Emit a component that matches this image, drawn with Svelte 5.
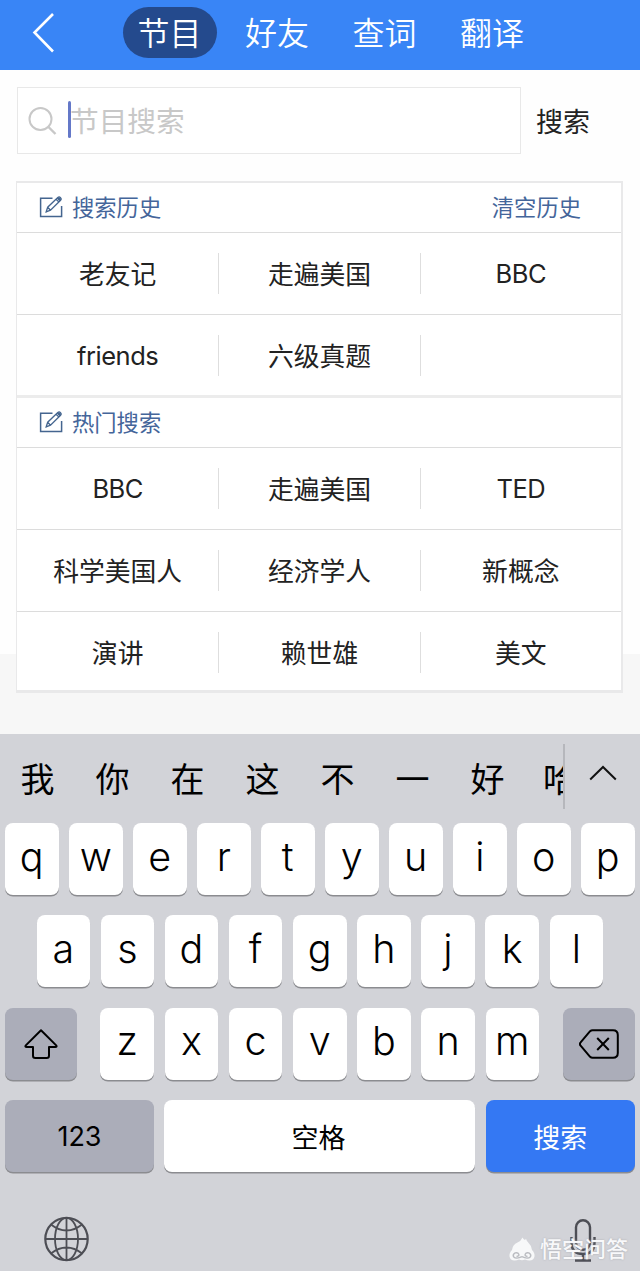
<script lang="ts">
  interface SearchGroup {
    title: string;
    action?: string;
    rows: string[][];
  }

  const tabs = ['节目', '好友', '查词', '翻译'];
  let activeTab = $state('节目');

  const groups: SearchGroup[] = [
    {
      title: '搜索历史',
      action: '清空历史',
      rows: [
        ['老友记', '走遍美国', 'BBC'],
        ['friends', '六级真题', '']
      ]
    },
    {
      title: '热门搜索',
      rows: [
        ['BBC', '走遍美国', 'TED'],
        ['科学美国人', '经济学人', '新概念'],
        ['演讲', '赖世雄', '美文']
      ]
    }
  ];

  const candidates = ['我', '你', '在', '这', '不', '一', '好', '哈'];
  const topKeys = 'qwertyuiop'.split('');
  const homeKeys = 'asdfghjkl'.split('');
  const bottomKeys = 'zxcvbnm'.split('');

  const isLatin = (word: string) => /^[a-z]+$/i.test(word);
</script>

<div class="screen">
  <header class="navbar">
    <button class="back" aria-label="返回">
      <svg width="24" height="42" viewBox="0 0 24 42" fill="none" stroke="#fff" stroke-width="2.6">
        <path d="M21 2 2.5 20.5 21 39.5" />
      </svg>
    </button>
    <nav class="tabs">
      {#each tabs as tab}
        <button class="tab" class:active={tab === activeTab} onclick={() => (activeTab = tab)}>{tab}</button>
      {/each}
    </nav>
  </header>

  <main class="content">
    <div class="search-row">
      <div class="search-box">
        <svg width="30" height="30" viewBox="0 0 30 30" fill="none" stroke="#c8c8c8" stroke-width="2">
          <circle cx="12.5" cy="13" r="11" />
          <path d="M20 20.5 27.5 28" stroke-width="2.4" />
        </svg>
        <span class="caret"></span>
        <span class="placeholder">节目搜索</span>
      </div>
      <button class="search-btn">搜索</button>
    </div>

    <div class="panel">
      {#each groups as group}
        <section class="group">
          <div class="group-head">
            <svg width="24" height="22" viewBox="0 0 24 22" fill="none" stroke="#44658f" stroke-width="1.5">
              <path d="M13.5 2.2H1.6v18.2h21V10" />
              <path d="m7.2 15.8 1.5-4.6L18.8 1.5q1.4-1.2 2.7.1t.1 2.6L11.5 14.2Z M8.7 11.2l2.8 3M17 3.2l3 2.9" stroke-width="1.3" />
              <path d="m17.8 2.5 1.7-1.3q2.9.2 2.3 2.8l-1.4 1.2Z" fill="#44658f" stroke="none" />
            </svg>
            <h2>{group.title}</h2>
            {#if group.action}
              <button class="clear">{group.action}</button>
            {/if}
          </div>
          {#each group.rows as row}
            <div class="row">
              {#each row as word}
                <div class="cell" class:latin={isLatin(word)}>{word}</div>
              {/each}
            </div>
          {/each}
        </section>
      {/each}
    </div>
  </main>

  <div class="keyboard">
    <div class="candidates">
      <div class="words">
        {#each candidates as word}
          <span>{word}</span>
        {/each}
      </div>
      <div class="expand">
        <svg width="28" height="16" viewBox="0 0 28 16" fill="none" stroke="#111" stroke-width="2">
          <path d="M1.2 14.5 14 2l12.8 12.5" />
        </svg>
      </div>
    </div>

    <div class="keys">
      <div class="key-row">
        {#each topKeys as k}<button class="key">{k}</button>{/each}
      </div>
      <div class="key-row home">
        {#each homeKeys as k}<button class="key">{k}</button>{/each}
      </div>
      <div class="key-row">
        <button class="key dark side" aria-label="shift">
          <svg width="36" height="32" viewBox="0 0 36 32" fill="none" stroke="#000" stroke-width="2" stroke-linejoin="round">
            <path d="M18 2.2 33.2 17.4q1.2 1.6-.9 1.6H26v8.7q0 2.3-2.3 2.3H12.3Q10 30 10 27.7V19H3.7q-2.1 0-.9-1.6Z" />
          </svg>
        </button>
        <div class="letters">
          {#each bottomKeys as k}<button class="key">{k}</button>{/each}
        </div>
        <button class="key dark side" aria-label="delete">
          <svg width="40" height="30" viewBox="0 0 40 30" fill="none" stroke="#000" stroke-width="2" stroke-linejoin="round">
            <path d="M13.5 1.2H34q4.8 0 4.8 4.8v18q0 4.8-4.8 4.8H13.5q-1.4 0-2.4-1L1.6 16.6q-1.5-1.6 0-3.2l9.5-11.2q1-1 2.4-1Z" />
            <path d="m18.2 9 11.6 12M29.8 9 18.2 21" />
          </svg>
        </button>
      </div>
      <div class="key-row functions">
        <button class="key dark numbers">123</button>
        <button class="key space">空格</button>
        <button class="key submit">搜索</button>
      </div>
    </div>

    <div class="dock">
      <svg width="46" height="46" viewBox="0 0 46 46" fill="none" stroke="#4d4e55" stroke-width="1.8">
        <circle cx="22.5" cy="23" r="21.2" stroke-width="2.2" />
        <ellipse cx="22.5" cy="23" rx="11.5" ry="21.2" />
        <path d="M22.5 1.8v42.4M1.3 23h42.4M7 8.5q7.500 6 15.500 6t15.500-6M7 37.500q7.500-6 15.500-6t15.500 6" />
      </svg>
      <svg class="mic" width="26" height="44" viewBox="0 0 26 44" fill="none" stroke="#4d4e55" stroke-width="2.4">
        <rect x="6" y="1.3" width="14" height="29.5" rx="7" />
        <path d="M1.5 18v6q0 11 11.5 11t11.5-11v-6M13 35v6M5 41.5h16" />
      </svg>
      <div class="watermark">
        <svg width="28" height="26" viewBox="0 0 28 26">
          <path d="M14.500.5q.8 1.800 2.500 2.500l1-1.200q.5 2 2.200 3.800 3.300 3 3.800 7.400 3 3 2.500 6.500-.8 4-5 4-2.500 0-4.500-1-3 1.500-6 0-2 1-4.500 1-4.200 0-5-4Q1 16 4 13q.5-5.500 5.500-7.500Q13 4 14.500.5Z" fill="#f7f8f9" />
          <path d="M8.500 19.500q3-.2 2.300-2.300-.8-1.900-3.600-1.300-2.700 1.300-1.700 3.800 2.700 2.800 8.500 0M19.500 19.500q-3-.2-2.300-2.300.8-1.900 3.600-1.300 2.700 1.300 1.700 3.800-2.700 2.800-8.500 0" fill="none" stroke="#b9bbc0" stroke-width="1.4" />
        </svg>
        <span>悟空问答</span>
      </div>
    </div>
  </div>
</div>

<style>
  :global(body) {
    margin: 0;
  }
  .screen {
    width: 640px;
    height: 1271px;
    display: flex;
    flex-direction: column;
    overflow: hidden;
    font-family: Inter, 'Noto Sans CJK SC', sans-serif;
    color: #222;
  }
  button {
    padding: 0;
    border: 0;
    background: none;
    font: inherit;
    color: inherit;
  }
  svg {
    display: block;
    flex: none;
  }
  .navbar {
    flex: none;
    height: 70px;
    box-sizing: border-box;
    padding: 7px 0 0 32px;
    display: flex;
    align-items: flex-start;
    background: #3985f6;
  }
  .back {
    margin-top: 5px;
    width: 91px;
  }
  .tabs {
    display: flex;
    gap: 13.5px;
  }
  .tab {
    width: 94px;
    height: 51px;
    padding: 2px 1px 0 0;
    border-radius: 26px;
    font-size: 32px;
    line-height: 49px;
    font-weight: 350;
    color: #fff;
  }
  .tab.active {
    background: #244a8d;
  }
  .content {
    flex: none;
    height: 664px;
    box-sizing: border-box;
    padding: 17px 17px 0 16px;
    background: linear-gradient(#fefefe 584px, #f7f7f7 584px);
  }
  .search-row {
    display: flex;
    align-items: center;
    height: 67px;
    margin-bottom: 27px;
  }
  .search-box {
    width: 504px;
    height: 67px;
    box-sizing: border-box;
    margin-left: 1px;
    padding-left: 10px;
    display: flex;
    align-items: center;
    border: 1px solid #e8e8e8;
    background: #fff;
  }
  .caret {
    width: 3px;
    height: 37px;
    margin: -2px 0 0 10px;
    border-radius: 2px;
    background: #6478c8;
  }
  .placeholder {
    margin-left: -1px;
    padding-top: 2px;
    font-size: 28.7px;
    line-height: 40px;
    color: #c8c8c8;
  }
  .search-btn {
    margin-left: 15px;
    padding-top: 4px;
    font-size: 27px;
    line-height: 40px;
  }
  .panel {
    height: 512px;
    box-sizing: border-box;
    border: solid #e9e9ea;
    border-width: 2px 2px 3px;
    border-left-width: 1.5px;
    background: #fff;
  }
  .group + .group {
    border-top: 3px solid #ececec;
    margin-top: -1px;
  }
  .group-head {
    height: 49px;
    padding: 0 40px 0 22px;
    display: flex;
    align-items: center;
    font-size: 22.3px;
    line-height: 30px;
    color: #44659a;
    border-bottom: 1px solid #dcdcdc;
  }
  .group-head h2 {
    margin: 0 0 0 9px;
    font-size: inherit;
    font-weight: 400;
  }
  .group-head svg {
    margin-top: -2px;
  }
  .clear {
    margin-left: auto;
  }
  .row {
    display: grid;
    grid-template-columns: repeat(3, 1fr);
    height: 81px;
    align-items: center;
  }
  .row + .row {
    border-top: 1px solid #dcdcdc;
  }
  .cell {
    height: 41px;
    line-height: 43px;
    text-align: center;
    font-size: 25.8px;
  }
  .cell.latin {
    font-size: 25.5px;
    letter-spacing: -0.5px;
    line-height: 41px;
  }
  .cell + .cell {
    border-left: 1.5px solid #dedede;
  }
  .keyboard {
    flex: 1;
    background: #d2d3d8;
    color: #000;
  }
  .candidates {
    display: flex;
    height: 89px;
  }
  .words {
    width: 565px;
    box-sizing: border-box;
    overflow: hidden;
    display: flex;
    font-size: 34px;
    line-height: 91px;
  }
  .words span {
    flex: none;
    width: 75px;
    text-align: center;
  }
  .words span:last-child {
    width: 70px;
  }
  .expand {
    height: 65px;
    margin: 10px 0 0 -2px;
    padding: 21px 0 0 24px;
    box-sizing: border-box;
    border-left: 2px solid #b6b7bc;
  }
  .keys {
    display: flex;
    flex-direction: column;
    gap: 20.3px;
    padding: 0 5.5px 0 5px;
  }
  .key-row {
    height: 72px;
    display: flex;
    justify-content: space-between;
  }
  .home {
    padding: 0 31.5px;
  }
  .letters {
    display: flex;
    gap: 10.7px;
  }
  .key {
    width: 53.5px;
    height: 72px;
    padding-bottom: 5px;
    box-sizing: border-box;
    border-radius: 8px;
    background: #fff;
    box-shadow: 0 1.5px 0 #8b8c90;
    font-size: 39.5px;
    line-height: 60px;
    font-weight: 350;
  }
  .key.dark {
    background: #abadb9;
  }
  .side {
    width: 71.5px;
    padding: 0;
    display: flex;
    align-items: center;
    justify-content: center;
  }
  .functions .key {
    padding: 6px 0 0;
    font-size: 27px;
    font-weight: 400;
  }
  .functions .numbers {
    width: 149px;
    padding-top: 3px;
  }
  .functions .space {
    width: 311px;
    margin-left: -1px;
    padding-right: 2px;
  }
  .functions .submit {
    width: 148.5px;
    color: #fff;
    background: #3478f3;
  }
  .dock {
    position: relative;
    display: flex;
    justify-content: space-between;
    padding: 44px 44px 0 44px;
  }
  .mic {
    margin-top: 3px;
  }
  .watermark {
    position: absolute;
    right: 12px;
    bottom: -2px;
    display: flex;
    align-items: center;
    gap: 4px;
    font-size: 22px;
    line-height: 32px;
    font-weight: 500;
    color: #f8f8fa;
    text-shadow: 0 0 2px #a5a7ad;
  }
  .watermark svg {
    margin-top: -4px;
  }
  .watermark span {
    margin-top: -6px;
  }
</style>
